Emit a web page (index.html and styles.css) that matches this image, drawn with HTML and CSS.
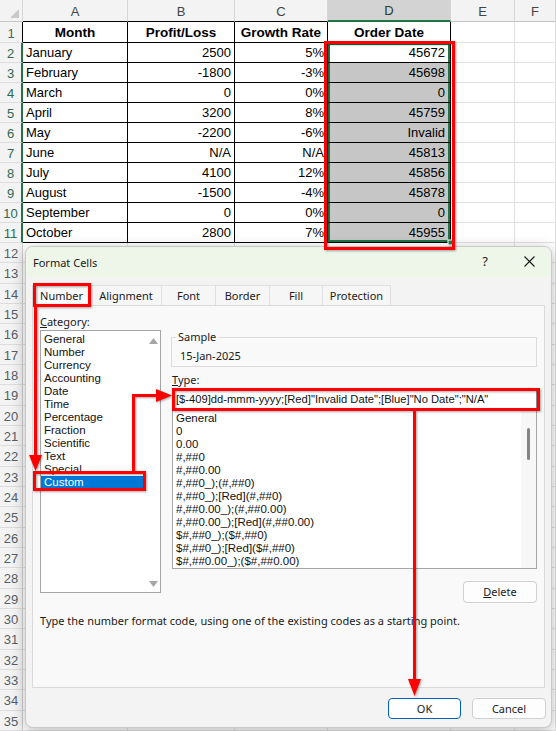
FILE: index.html
```html
<!DOCTYPE html>
<html>
<head>
<meta charset="utf-8">
<title>Format Cells</title>
<link rel="stylesheet" href="styles.css">
</head>
<body>
<div class="sheet">
  <div class="r hr"><span class="corner"><i class="tri"></i></span><span class="tb">A</span><span class="tb">B</span><span class="tb">C</span><span class="selh">D</span><span>E</span><span>F</span></div>
  <div class="r r1"><span class="rh r1h">1</span><span class="t hd">Month</span><span class="t hd">Profit/Loss</span><span class="t hd">Growth Rate</span><span class="t hd">Order Date</span><span></span><span></span></div>
  <div class="r"><span class="rh s">2</span><span class="t">January</span><span class="t n">2500</span><span class="t n">5%</span><span class="t d act">45672</span><span></span><span></span></div>
  <div class="r"><span class="rh s">3</span><span class="t">February</span><span class="t n">-1800</span><span class="t n">-3%</span><span class="t d">45698</span><span></span><span></span></div>
  <div class="r"><span class="rh s">4</span><span class="t">March</span><span class="t n">0</span><span class="t n">0%</span><span class="t d">0</span><span></span><span></span></div>
  <div class="r"><span class="rh s">5</span><span class="t">April</span><span class="t n">3200</span><span class="t n">8%</span><span class="t d">45759</span><span></span><span></span></div>
  <div class="r"><span class="rh s">6</span><span class="t">May</span><span class="t n">-2200</span><span class="t n">-6%</span><span class="t d">Invalid</span><span></span><span></span></div>
  <div class="r"><span class="rh s">7</span><span class="t">June</span><span class="t n">N/A</span><span class="t n">N/A</span><span class="t d">45813</span><span></span><span></span></div>
  <div class="r"><span class="rh s">8</span><span class="t">July</span><span class="t n">4100</span><span class="t n">12%</span><span class="t d">45856</span><span></span><span></span></div>
  <div class="r"><span class="rh s">9</span><span class="t">August</span><span class="t n">-1500</span><span class="t n">-4%</span><span class="t d">45878</span><span></span><span></span></div>
  <div class="r"><span class="rh s">10</span><span class="t">September</span><span class="t n">0</span><span class="t n">0%</span><span class="t d">0</span><span></span><span></span></div>
  <div class="r"><span class="rh s">11</span><span class="t">October</span><span class="t n">2800</span><span class="t n">7%</span><span class="t d last">45955</span><span></span><span></span></div>
  <div class="r lo"><span class="rh">12</span><span></span><span></span><span></span><span></span><span></span><span></span></div>
  <div class="r lo"><span class="rh">13</span><span></span><span></span><span></span><span></span><span></span><span></span></div>
  <div class="r lo"><span class="rh">14</span><span></span><span></span><span></span><span></span><span></span><span></span></div>
  <div class="r lo"><span class="rh">15</span><span></span><span></span><span></span><span></span><span></span><span></span></div>
  <div class="r lo"><span class="rh">16</span><span></span><span></span><span></span><span></span><span></span><span></span></div>
  <div class="r lo"><span class="rh">17</span><span></span><span></span><span></span><span></span><span></span><span></span></div>
  <div class="r lo"><span class="rh">18</span><span></span><span></span><span></span><span></span><span></span><span></span></div>
  <div class="r lo"><span class="rh">19</span><span></span><span></span><span></span><span></span><span></span><span></span></div>
  <div class="r lo"><span class="rh">20</span><span></span><span></span><span></span><span></span><span></span><span></span></div>
  <div class="r lo"><span class="rh">21</span><span></span><span></span><span></span><span></span><span></span><span></span></div>
  <div class="r lo"><span class="rh">22</span><span></span><span></span><span></span><span></span><span></span><span></span></div>
  <div class="r lo"><span class="rh">23</span><span></span><span></span><span></span><span></span><span></span><span></span></div>
  <div class="r lo"><span class="rh">24</span><span></span><span></span><span></span><span></span><span></span><span></span></div>
  <div class="r lo"><span class="rh">25</span><span></span><span></span><span></span><span></span><span></span><span></span></div>
  <div class="r lo"><span class="rh">26</span><span></span><span></span><span></span><span></span><span></span><span></span></div>
  <div class="r lo"><span class="rh">27</span><span></span><span></span><span></span><span></span><span></span><span></span></div>
  <div class="r lo"><span class="rh">28</span><span></span><span></span><span></span><span></span><span></span><span></span></div>
  <div class="r lo"><span class="rh">29</span><span></span><span></span><span></span><span></span><span></span><span></span></div>
  <div class="r lo"><span class="rh">30</span><span></span><span></span><span></span><span></span><span></span><span></span></div>
  <div class="r lo"><span class="rh">31</span><span></span><span></span><span></span><span></span><span></span><span></span></div>
  <div class="r lo"><span class="rh">32</span><span></span><span></span><span></span><span></span><span></span><span></span></div>
  <div class="r lo"><span class="rh">33</span><span></span><span></span><span></span><span></span><span></span><span></span></div>
  <div class="r lo"><span class="rh">34</span><span></span><span></span><span></span><span></span><span></span><span></span></div>
  <div class="r lo"><span class="rh">35</span><span></span><span></span><span></span><span></span><span></span><span></span></div>
</div>

<div class="dialog">
  <div class="titlebar">
    <span class="title">Format Cells</span>
    <span class="tbtn help">?</span>
    <span class="tbtn close"><svg width="11" height="11" viewBox="0 0 11 11"><path d="M0.5 0.5L10.5 10.5M10.5 0.5L0.5 10.5" stroke="#1b1b1b" stroke-width="1.1" fill="none"/></svg></span>
  </div>
  <div class="dbody">
    <div class="tabs">
      <div class="tab active">Number</div>
      <div class="tab">Alignment</div>
      <div class="tab">Font</div>
      <div class="tab">Border</div>
      <div class="tab">Fill</div>
      <div class="tab last">Protection</div>
    </div>
    <div class="panel">
      <div class="cols">
        <div class="leftcol">
          <div class="lbl"><u>C</u>ategory:</div>
          <div class="catlist">
            <div class="items">
              <div>General</div><div>Number</div><div>Currency</div><div>Accounting</div><div>Date</div><div>Time</div><div>Percentage</div><div>Fraction</div><div>Scientific</div><div>Text</div><div>Special</div><div class="sel">Custom</div>
            </div>
            <div class="arrows">
              <svg width="9" height="6" viewBox="0 0 9 6"><path d="M0 6L4.5 0L9 6Z" fill="#a6a6a6"/></svg>
              <svg width="9" height="6" viewBox="0 0 9 6"><path d="M0 0L4.5 6L9 0Z" fill="#a6a6a6"/></svg>
            </div>
          </div>
        </div>
        <div class="rightcol">
          <fieldset class="sample"><legend>Sample</legend><div class="sval">15-Jan-2025</div></fieldset>
          <div class="lbl tlbl"><u>T</u>ype:</div>
          <div class="typein">[$-409]dd-mmm-yyyy;[Red]"Invalid Date";[Blue]"No Date";"N/A"</div>
          <div class="typelist">
            <div class="items">
              <div>General</div><div>0</div><div>0.00</div><div>#,##0</div><div>#,##0.00</div><div>#,##0_);(#,##0)</div><div>#,##0_);[Red](#,##0)</div><div>#,##0.00_);(#,##0.00)</div><div>#,##0.00_);[Red](#,##0.00)</div><div>$#,##0_);($#,##0)</div><div>$#,##0_);[Red]($#,##0)</div><div>$#,##0.00_);($#,##0.00)</div>
            </div>
            <div class="thin"><div class="thumb"></div></div>
          </div>
          <div class="delrow"><button class="btn del"><u>D</u>elete</button></div>
        </div>
      </div>
      <div class="desc">Type the number format code, using one of the existing codes as a starting point.</div>
    </div>
    <div class="btnrow">
      <button class="btn ok">OK</button>
      <button class="btn">Cancel</button>
    </div>
  </div>
</div>

<svg class="marks" width="556" height="731" viewBox="0 0 556 731">
  <rect x="448" y="240" width="5" height="5" fill="#217346" stroke="#fff" stroke-width="1"/>
  <g class="red" fill="none" stroke="#ff0000" stroke-width="3">
    <rect x="325.5" y="42.5" width="128" height="206"/>
    <rect x="34.5" y="284.5" width="55" height="21"/>
    <path d="M35.5 306V457"/>
    <rect x="34.5" y="472.5" width="110" height="17"/>
    <path d="M133.5 472V395.5H158"/>
    <rect x="173.5" y="389.5" width="365" height="20"/>
    <path d="M414.5 411V681"/>
  </g>
  <g fill="#ff0000">
    <polygon points="29,455 42,455 35.5,471"/>
    <polygon points="156,389 156,402 172,395.5"/>
    <polygon points="408,679 421,679 414.5,696"/>
  </g>
</svg>
</body>
</html>
```

FILE: styles.css
```css
* { box-sizing: border-box; }
html, body { margin: 0; padding: 0; }
body {
  width: 556px;
  height: 731px;
  overflow: hidden;
  position: relative;
  background: #fff;
  font-family: "Liberation Sans", Arial, sans-serif;
  color: #000;
}

/* ---------- spreadsheet ---------- */
.sheet { display: flex; flex-direction: column; }
.r {
  display: grid;
  grid-template-columns: 23px 105px 107px 93px 123px 64px 1fr;
  height: 20px;
  flex: none;
}
.r.hr { height: 22px; }
.r.r1 { height: 21px; }
.r.lo { height: 20.33px; }
.r > span {
  display: flex;
  align-items: flex-end;
  padding: 0 3px 1px;
  border-right: 1px solid #e1e1e1;
  border-bottom: 1px solid #e1e1e1;
  font-size: 13px;
  line-height: 16px;
  white-space: nowrap;
  overflow: hidden;
}
.r.hr > span {
  background: #f3f3f3;
  color: #444;
  justify-content: center;
  align-items: center;
  padding: 2px 0 0;
  border-right-color: #d6d6d6;
  border-bottom-color: #c4c4c4;
}
.r.hr > span.tb { border-bottom-color: #000; }
.r.hr > span.selh {
  background: #d3d3d3;
  color: #1f3d2c;
  border-bottom: 2px solid #217346;
}
.r.hr > span.corner {
  justify-content: flex-end;
  align-items: flex-end;
  padding: 0 3px 3px 0;
}
.tri {
  display: block;
  width: 0;
  height: 0;
  border-left: 9px solid transparent;
  border-bottom: 9px solid #c8c8c8;
}
.r > span.rh {
  background: #f3f3f3;
  justify-content: center;
  align-items: center;
  padding: 3px 0 0;
  color: #555d66;
  border-right-color: #d0d0d0;
  border-bottom-color: #dcdcdc;
}
.r > span.rh.r1h { color: #3f6b5c; border-right-color: #000; }
.r > span.rh.s {
  color: #2d6a50;
  border-right: 2px solid #217346;
}
.r > span.t { border-right-color: #000; border-bottom-color: #000; }
.r > span.hd { justify-content: center; font-weight: bold; font-size: 13.5px; }
.r > span.n { justify-content: flex-end; }
.r > span.d {
  justify-content: flex-end;
  padding-right: 5px;
  background: #c6c6c6;
  box-shadow: inset 2px 0 0 #217346, inset -2px 0 0 #217346;
}
.r > span.d.act { background: #fff; box-shadow: inset 2px 0 0 #217346, inset -2px 0 0 #217346, inset 0 2px 0 #217346; }
.r > span.d.last { box-shadow: inset 2px 0 0 #217346, inset -2px 0 0 #217346, inset 0 -2px 0 #217346; }

/* ---------- dialog ---------- */
.dialog {
  position: absolute;
  left: 25px;
  top: 246px;
  width: 527px;
  background: #f3f3f3;
  border: 1px solid #c9c9c9;
  border-radius: 8px;
  box-shadow: 0 3px 14px rgba(0, 0, 0, 0.28);
  overflow: hidden;
  font-family: "Noto Sans", "Open Sans", sans-serif;
  font-size: 11px;
  color: #1a1a1a;
  display: flex;
  flex-direction: column;
  z-index: 5;
}
.titlebar {
  height: 30px;
  background: #edf6e8;
  display: flex;
  align-items: center;
  padding-left: 7px;
  flex: none;
}
.title { flex: 1; font-size: 11px; color: #1a1a1a; }
.tbtn {
  width: 44px;
  height: 30px;
  display: flex;
  align-items: center;
  justify-content: center;
}
.help { font-size: 13px; color: #222; padding-bottom: 2px; }
.close svg { display: block; margin-top: -2px; }

.dbody {
  padding: 8px 6px 8px 6px;
  display: flex;
  flex-direction: column;
}
.tabs { display: flex; height: 20px; position: relative; z-index: 1; }
.tab {
  height: 20px;
  line-height: 19px;
  text-align: center;
  background: #f6f6f6;
  border-top: 1px solid #e0e0e0;
  border-left: 1px solid #e0e0e0;
  color: #1a1a1a;
}
.tab.last { border-right: 1px solid #e0e0e0; }
.tab.active {
  background: #f9f9f9;
  border-color: #dadada;
  height: 21px;
  margin-bottom: -1px;
}
.tab:nth-child(1) { width: 58px; }
.tab:nth-child(2) { width: 71px; }
.tab:nth-child(3) { width: 54px; }
.tab:nth-child(4) { width: 54px; }
.tab:nth-child(5) { width: 53px; }
.tab:nth-child(6) { width: 69px; }

.panel {
  height: 383px;
  background: #f9f9f9;
  border: 1px solid #dadada;
  padding: 8px 7px 0 7px;
  display: flex;
  flex-direction: column;
}
.cols { display: flex; gap: 10px; }
.leftcol { width: 121px; display: flex; flex-direction: column; }
.rightcol { width: 366px; display: flex; flex-direction: column; }
.lbl { height: 16px; line-height: 16px; }

.catlist {
  height: 263px;
  background: #fff;
  border: 1px solid #a5a5a5;
  display: flex;
}
.catlist .items { flex: 1; padding-top: 2px; }
.items > div {
  height: 13px;
  line-height: 13px;
  padding-left: 3px;
  white-space: nowrap;
  color: #111;
  font-family: "Liberation Sans", Arial, sans-serif;
  font-size: 11.5px;
}
.catlist .items > div.sel { background: #0078d7; color: #fff; }
.arrows {
  width: 14px;
  display: flex;
  flex-direction: column;
  justify-content: space-between;
  align-items: center;
  padding: 7px 0 5px;
}
.arrows svg { display: block; }

.sample {
  margin: 15px 0 0;
  padding: 3px 8px 2px;
  border: 1px solid #dcdcdc;
  min-width: 0;
}
.sample legend {
  padding: 0 2px;
  margin-left: -4px;
  line-height: 16px;
  height: 16px;
}
.sval { line-height: 16px; height: 16px; }
.tlbl { margin-top: 5px; margin-left: 1px; }
.typein {
  margin: 2px 0 0 1px;
  height: 19px;
  background: #fff;
  border: 1px solid #8a8a8a;
  line-height: 17px;
  padding-left: 3px;
  white-space: nowrap;
  overflow: hidden;
  color: #111;
  font-family: "Liberation Sans", Arial, sans-serif;
  font-size: 11.2px;
}
.typelist {
  margin: 1px 0 0 1px;
  height: 159px;
  background: #fff;
  border: 1px solid #a5a5a5;
  display: flex;
}
.typelist .items { flex: 1; padding-top: 1px; }
.thin {
  width: 15px;
  background: #f7f7f7;
  padding-top: 17px;
  display: flex;
  justify-content: center;
}
.thumb { width: 3px; height: 32px; background: #858585; border-radius: 2px; }
.delrow { display: flex; justify-content: flex-end; margin-top: 12px; }

.btn {
  font-family: "Noto Sans", "Open Sans", sans-serif;
  font-size: 11px;
  color: #1a1a1a;
  background: #fdfdfd;
  border: 1px solid #d0d0d0;
  border-radius: 4px;
  height: 21px;
  padding: 0;
  line-height: 18px;
}
.del { width: 74px; height: 22px; }
.desc { margin-top: 10px; line-height: 16px; white-space: nowrap; }

.btnrow {
  display: flex;
  justify-content: flex-end;
  gap: 11px;
  margin: 10px -1px 0 0;
}
.btnrow .btn { width: 74px; }
.btnrow .btn.ok { width: 73px; border: 1.5px solid #005fb8; background: #fff; }

/* ---------- annotations ---------- */
.marks {
  position: absolute;
  left: 0;
  top: 0;
  z-index: 10;
  pointer-events: none;
  filter: drop-shadow(1px 1px 1px rgba(0, 0, 0, 0.35));
}
```
